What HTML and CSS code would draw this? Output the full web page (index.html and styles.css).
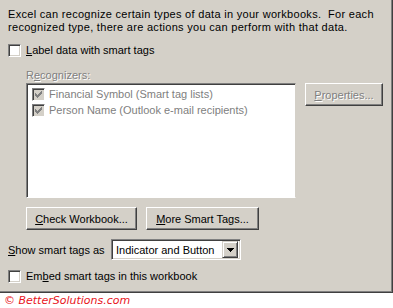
FILE: index.html
```html
<!DOCTYPE html>
<html lang="en">
<head>
    <meta charset="UTF-8">
    <title>Smart Tags</title>
    <link rel="stylesheet" href="styles.css">
</head>
<body>
    <div class="dialog">
        <p class="intro">Excel can recognize certain types of data in your workbooks.&nbsp; For each<br>recognized type, there are actions you can perform with that data.</p>

        <div class="check-row label-row">
            <span class="checkbox"></span>
            <span><u>L</u>abel data with smart tags</span>
        </div>

        <div class="group">
            <div class="caption disabled">R<u>e</u>cognizers:</div>
            <div class="list-row">
                <div class="listbox">
                    <div class="item">
                        <span class="checkbox grey">
                            <svg width="7" height="7" viewBox="0 0 7 7"><path d="M0 2h1v3h-1zM1 3h1v3h-1zM2 4h1v3h-1zM3 3h1v3h-1zM4 2h1v3h-1zM5 1h1v3h-1zM6 0h1v3h-1z" fill="#808080"/></svg>
                        </span>
                        <span class="disabled-flat">Financial Symbol (Smart tag lists)</span>
                    </div>
                    <div class="item">
                        <span class="checkbox grey">
                            <svg width="7" height="7" viewBox="0 0 7 7"><path d="M0 2h1v3h-1zM1 3h1v3h-1zM2 4h1v3h-1zM3 3h1v3h-1zM4 2h1v3h-1zM5 1h1v3h-1zM6 0h1v3h-1z" fill="#808080"/></svg>
                        </span>
                        <span class="disabled-flat">Person Name (Outlook e-mail recipients)</span>
                    </div>
                </div>
                <div class="btn btn-props disabled"><u>P</u>roperties...</div>
            </div>
            <div class="btn-row">
                <div class="btn btn-check"><u>C</u>heck Workbook...</div>
                <div class="btn btn-more"><u>M</u>ore Smart Tags...</div>
            </div>
        </div>

        <div class="show-row">
            <span class="show-label"><u>S</u>how smart tags as</span>
            <div class="select">
                <span class="select-text">Indicator and Button</span>
                <span class="select-arrow">
                    <svg width="7" height="4" viewBox="0 0 7 4"><path d="M0 0h7v1h-1v1h-1v1h-1v1h-1v-1h-1v-1h-1v-1h-1z" fill="#000"/></svg>
                </span>
            </div>
        </div>

        <div class="check-row embed-row">
            <span class="checkbox"></span>
            <span>Em<u>b</u>ed smart tags in this workbook</span>
        </div>
    </div>
    <div class="copyright">&copy; BetterSolutions.com</div>
</body>
</html>
```

FILE: styles.css
```css
* {
    box-sizing: border-box;
}
body {
    margin: 0;
    background: #ffffff;
    font-family: "Liberation Sans", Arial, sans-serif;
    font-size: 11px;
    color: #000;
}
.dialog {
    width: 393px;
    height: 293px;
    background: #d4d0c8;
    border-right: 1px solid #404040;
    border-bottom: 1px solid #404040;
    box-shadow: inset -1px -1px #808080;
    padding: 8px 0 0 8px;
}
.intro {
    margin: 0;
    line-height: 13px;
    letter-spacing: 0.3px;
}

/* checkboxes */
.check-row {
    display: flex;
    align-items: center;
    height: 13px;
    line-height: 13px;
}
.check-row .checkbox {
    margin-right: 5px;
}
.label-row {
    margin-top: 10px;
}
.embed-row {
    margin-top: 10px;
}
.checkbox {
    display: inline-flex;
    width: 13px;
    height: 13px;
    flex: none;
    background: #fff;
    border-top: 1px solid #808080;
    border-left: 1px solid #808080;
    border-bottom: 1px solid #fff;
    border-right: 1px solid #fff;
    box-shadow: inset 1px 1px #404040, inset -1px -1px #d4d0c8;
    padding: 2px;
}
.checkbox.grey {
    background: #d4d0c8;
}

/* recognizers group */
.group {
    padding-left: 18px;
}
.caption {
    margin-top: 12px;
    line-height: 13px;
    height: 14px;
}
.disabled {
    color: #808080;
    text-shadow: 1px 1px #fff;
}
.disabled-flat {
    color: #808080;
}
.list-row {
    display: flex;
    gap: 9px;
}
.listbox {
    width: 270px;
    height: 115px;
    background: #fff;
    border-top: 1px solid #808080;
    border-left: 1px solid #808080;
    border-bottom: 1px solid #fff;
    border-right: 1px solid #d4d0c8;
    box-shadow: inset 1px 1px #404040;
    padding: 2px 0 0 5px;
}
.item {
    display: flex;
    align-items: center;
    height: 16px;
    gap: 4px;
}

/* buttons */
.btn {
    display: flex;
    align-items: center;
    justify-content: center;
    height: 23px;
    background: #d4d0c8;
    border-top: 1px solid #fff;
    border-left: 1px solid #fff;
    border-right: 1px solid #404040;
    border-bottom: 1px solid #404040;
    box-shadow: inset -1px -1px #808080;
}
.btn-props {
    width: 78px;
}
.btn-row {
    display: flex;
    gap: 9px;
    margin-top: 9px;
}
.btn-check {
    width: 111px;
}
.btn-more {
    width: 113px;
}

/* show smart tags row */
.show-row {
    display: flex;
    align-items: center;
    margin-top: 9px;
    height: 21px;
}
.show-label {
    width: 103px;
}
.select {
    display: flex;
    align-items: center;
    width: 130px;
    height: 21px;
    background: #fff;
    border-top: 1px solid #808080;
    border-left: 1px solid #808080;
    border-bottom: 1px solid #fff;
    border-right: 1px solid #fff;
    box-shadow: inset 1px 1px #404040, inset -1px -1px #d4d0c8;
    padding: 2px;
}
.select-text {
    flex: 1;
    padding-left: 2px;
}
.select-arrow {
    display: flex;
    align-items: center;
    justify-content: center;
    width: 16px;
    height: 17px;
    background: #d4d0c8;
    border-top: 1px solid #d4d0c8;
    border-left: 1px solid #d4d0c8;
    border-right: 1px solid #404040;
    border-bottom: 1px solid #404040;
    box-shadow: inset 1px 1px #fff, inset -1px -1px #808080;
}

.copyright {
    padding-left: 4px;
    margin-top: 1px;
    color: #e8141c;
    font-family: "DejaVu Sans", Verdana, sans-serif;
    font-style: italic;
    font-size: 11px;
    line-height: 13px;
}
```
